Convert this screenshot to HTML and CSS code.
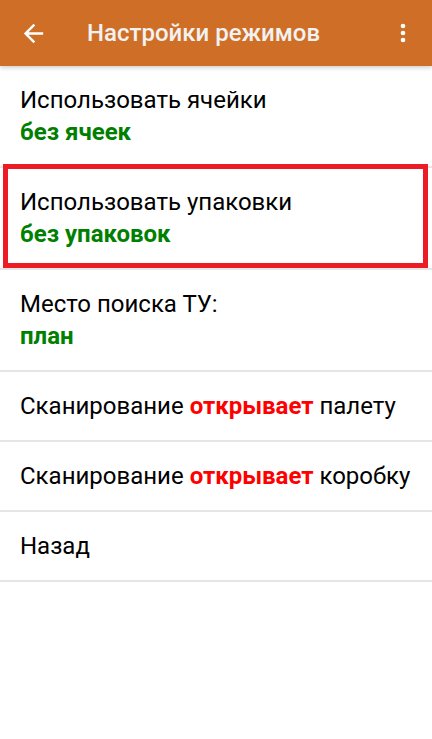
FILE: index.html
```html
<!DOCTYPE html>
<html lang="ru">
<head>
  <meta charset="UTF-8" />
  <meta name="viewport" content="width=device-width, initial-scale=1.0" />
  <title>Настройки режимов</title>
  <link rel="stylesheet" href="styles.css">
</head>
<body>
  <div class="toolbar">
    <svg class="back" viewBox="0 0 24 24" width="29" height="29">
      <path d="M20 11H7.83l5.59-5.59L12 4l-8 8 8 8 1.41-1.41L7.83 13H20v-2z" fill="#fff"/>
    </svg>
    <div class="title">Настройки режимов</div>
    <svg class="menu" viewBox="0 0 24 24" width="28" height="28">
      <circle cx="12" cy="6" r="2" fill="#fff"/>
      <circle cx="12" cy="12" r="2" fill="#fff"/>
      <circle cx="12" cy="18" r="2" fill="#fff"/>
    </svg>
  </div>

  <div class="list">
    <div class="item">
      <div>Использовать ячейки</div>
      <div class="value">без ячеек</div>
    </div>
    <div class="item selected">
      <div>Использовать упаковки</div>
      <div class="value">без упаковок</div>
    </div>
    <div class="item">
      <div>Место поиска ТУ:</div>
      <div class="value">план</div>
    </div>
    <div class="item">
      <div>Сканирование <span class="hot">открывает</span> палету</div>
    </div>
    <div class="item">
      <div>Сканирование <span class="hot">открывает</span> коробку</div>
    </div>
    <div class="item">
      <div>Назад</div>
    </div>
  </div>
</body>
</html>
```

FILE: styles.css
```css
body {
  margin: 0;
  background: #fff;
  font-family: Roboto, "Noto Sans", sans-serif;
}
.toolbar {
  height: 66px;
  background: #cf6f27;
  display: flex;
  align-items: center;
  position: relative;
  box-shadow: 0 2px 4px rgba(0,0,0,0.18);
  z-index: 1;
}
.back {
  margin-left: 19px;
}
.title {
  margin-left: 39px;
  color: #f2f2f2;
  font-size: 24px;
  font-weight: 500;
  flex: 1;
}
.menu {
  margin-right: 15px;
}
.item {
  padding: 18px 20px;
  border-bottom: 2px solid #e6e6e6;
  font-size: 24px;
  line-height: 32px;
  color: #000;
  position: relative;
}
.value {
  color: #008000;
  font-weight: bold;
}
.hot {
  color: #ff0000;
  font-weight: bold;
}
.selected::after {
  content: "";
  position: absolute;
  top: -4px;
  left: 3px;
  right: 4px;
  bottom: 0;
  border: 5px solid #ed1c24;
}
```
